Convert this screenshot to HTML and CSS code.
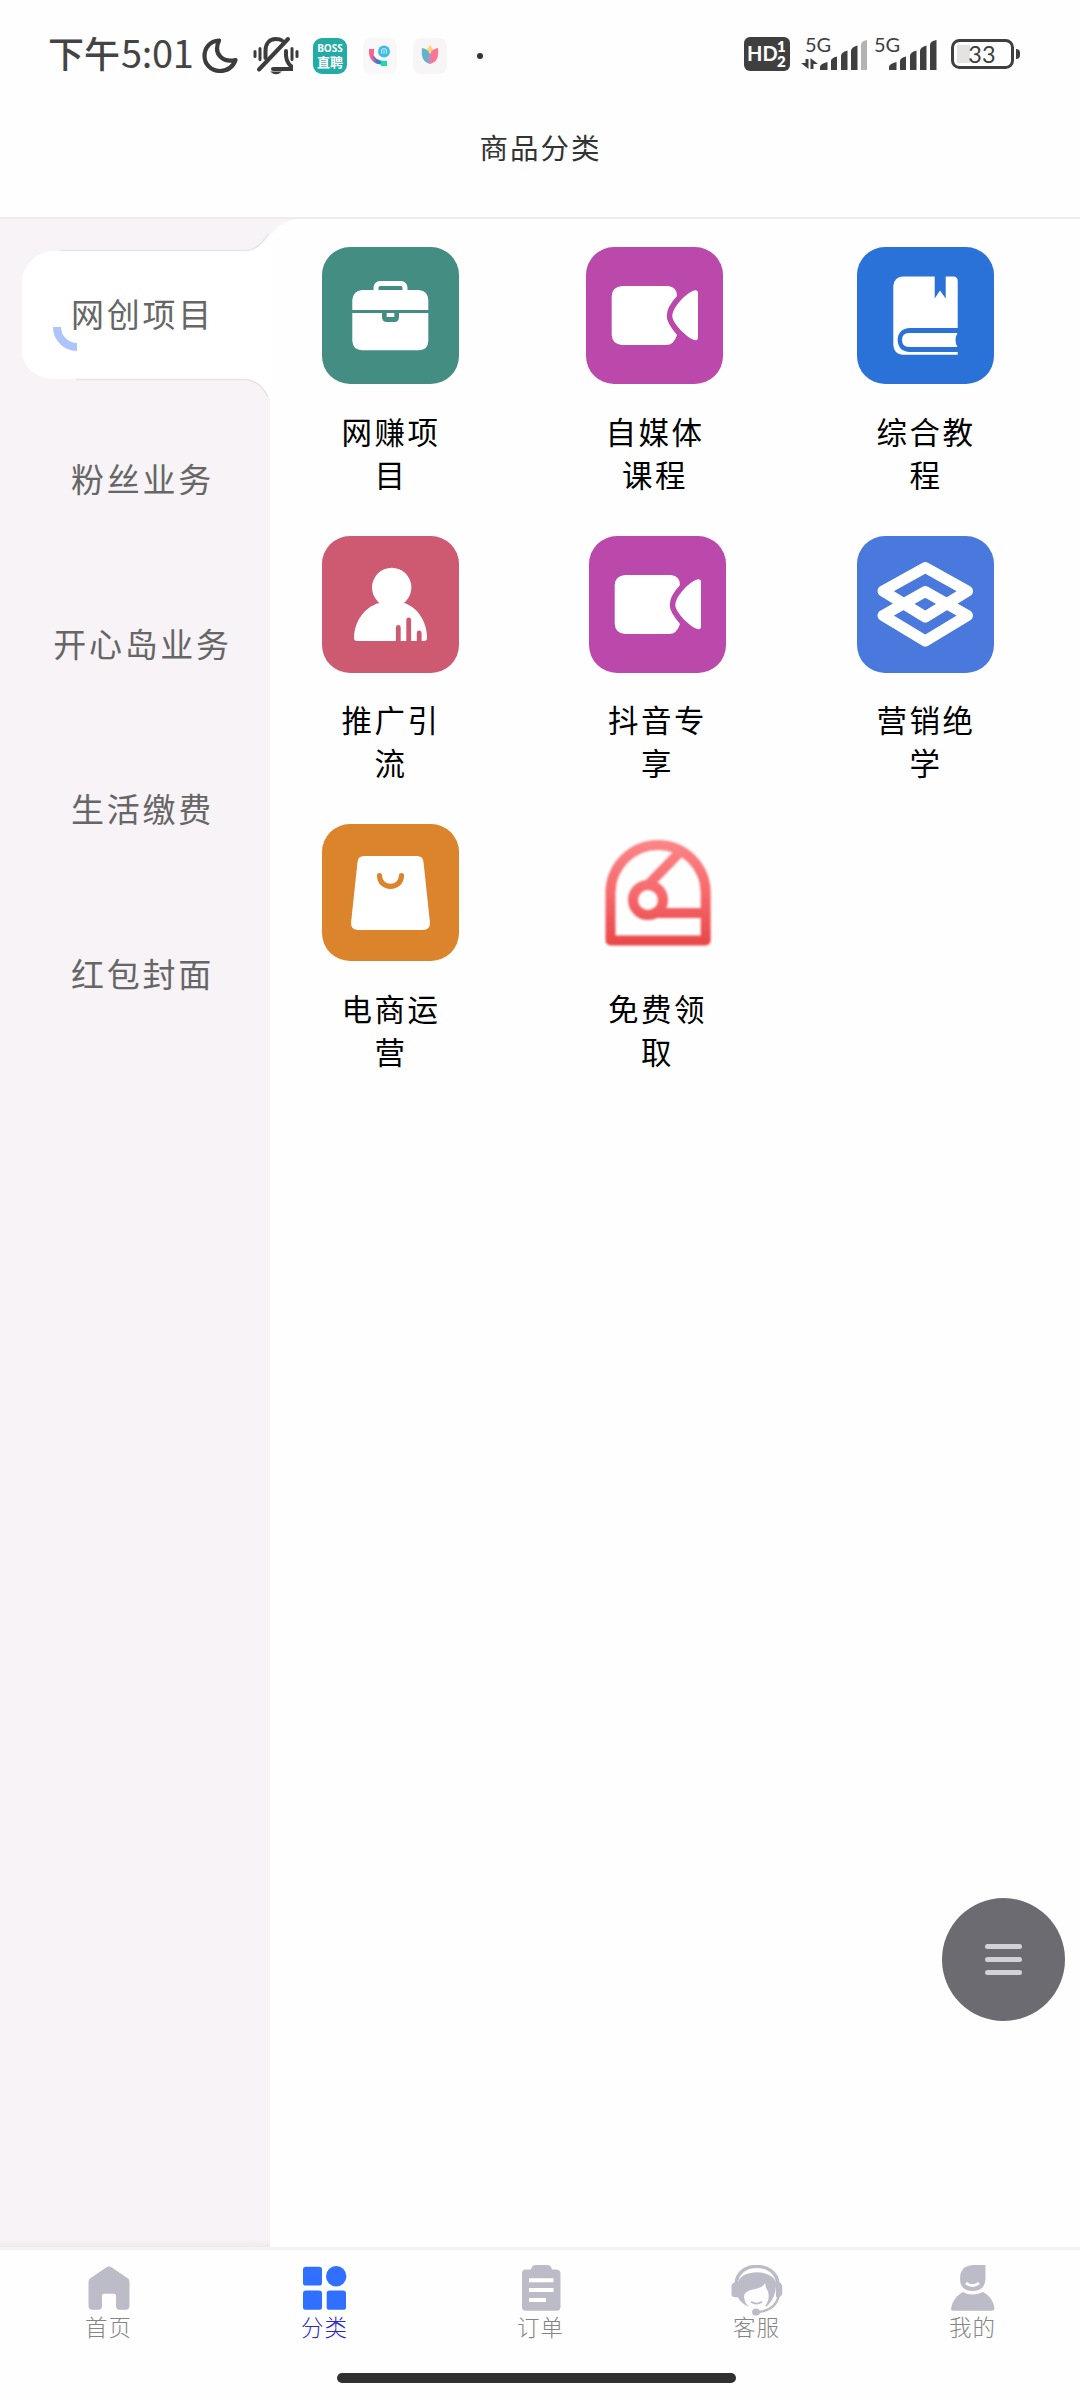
FILE: index.html
```html
<!DOCTYPE html>
<html lang="zh-CN">
<head>
<meta charset="utf-8">
<title>商品分类</title>
<link rel="stylesheet" href="styles.css">
</head>
<body>
<svg class="defs" width="0" height="0" aria-hidden="true">
  <symbol id="video" viewBox="0 0 137 137">
    <path fill="#fff" d="M36 39H82Q91 40 91 49Q80.700 60 80.700 69Q80.700 76 91 88Q88 98 80 98H36Q26 97 25.700 88V49Q26 40 36 39Z"/>
    <path fill="#fff" d="M86.300 69C86.300 60 101 45 109 43.200Q112 43 112 46V90Q112 94 108.500 93C101 91 86.300 76 86.300 69Z"/>
  </symbol>
</svg>
<div class="app">
  <header class="status">
    <div class="status-left">
      <span class="time">下午<b>5:01</b></span>
      <svg class="moon" width="36" height="36" viewBox="0 0 36 36"><path d="M17 2.500C8 3 2.500 10 2.500 18A15 15 0 0 0 17.500 33C25 33 31 29 33.500 22C22 25 10.500 17 17 2.500Z" fill="none" stroke="#3c3c3c" stroke-width="4.200" stroke-linejoin="round"/></svg>
      <svg class="bell" width="46" height="40" viewBox="0 0 46 40" fill="none" stroke="#3c3c3c" stroke-width="4" stroke-linecap="round"><path d="M2 15.500v5M7 12.500v11M39 12.500v11M44 15.500v5" stroke-width="3"/><path d="M12.500 22V15C12.500 7 17 3 22.500 3Q27 3 29 4.500M33 15V20Q34 27 38 30V33H20"/><path d="M6 33.500L35 3"/><path d="M17 35.500H29Q23 41 17 35.500Z" fill="#3c3c3c" stroke="none"/></svg>
      <svg class="boss" width="34" height="36" viewBox="0 0 34 36"><rect width="34" height="36" rx="9" fill="#23aba5"/><text x="17" y="14" class="boss-en">BOSS</text><text x="17" y="29" class="boss-cn">直聘</text></svg>
      <svg class="call" width="34" height="36" viewBox="0 0 34 36"><defs><linearGradient id="cg"><stop stop-color="#ff5f92"/><stop offset=".45" stop-color="#3d73c9"/><stop offset="1" stop-color="#18ddb0"/></linearGradient></defs><rect width="34" height="36" rx="8" fill="#f8f8f9"/><path d="M8 11V15Q9 25 23 25" stroke="url(#cg)" stroke-width="4" fill="none"/><path d="M6 11h5v5H6z" fill="#ff6096"/><path d="M18 23h6v5h-6z" fill="#18dcb0"/><circle cx="21" cy="13.500" r="6" fill="#41bce9"/><path d="M18.500 15.500V13a2.500 2.500 0 0 1 5 0v2.500M21 12v4" stroke="#c7f2ff" fill="none"/></svg>
      <svg class="tulip" width="34" height="36" viewBox="0 0 34 36"><rect width="34" height="36" rx="8" fill="#f7f5f6"/><path d="M17 7L22 14H12Z" fill="#ffd477"/><path d="M17 26C10 24 8 19 9 10Q15 11 17 16Z" fill="#62b3ca"/><path d="M17 26C24 24 26 19 25 10Q19 11 17 16Z" fill="#fb7597"/><path d="M17 16Q21 22 17 26Q13 22 17 16Z" fill="#d184b7"/></svg>
      <span class="dot"></span>
    </div>
    <svg class="status-right" width="284" height="64" viewBox="0 -12 284 64" fill="#3f3f3f">
      <rect x="4" y="2" width="46" height="34" rx="6"/>
      <text x="7" y="26" class="hd">HD</text><text x="37" y="17" class="sim">1</text><text x="37" y="32" class="sim">2</text>
      <text x="65" y="17" class="net">5G</text><text x="134" y="17" class="net">5G</text>
      <path d="M65.500 24H68.500V34L61 28H65.500ZM70.500 34V23L78 29H73.500V34Z"/>
      <path d="M80 35V32Q80 29 87.500 27V35ZM91 35V26Q91 23 97 21.500V35ZM101 35V21Q101 17 107.500 15.500V35ZM111 35V16Q111 12 117.500 10.500V35Z"/>
      <path d="M121 35V10Q121 6 127 5V35Z" fill="#b3b3b3"/>
      <path d="M149 35V32Q149 29 156.500 27V35ZM160 35V26Q160 23 166 21.500V35ZM170 35V21Q170 17 176.500 15.500V35ZM180 35V16Q180 12 186.500 10.500V35ZM190 35V10Q190 6 196.500 5V35Z"/>
      <path d="M218 10h12v18h-12q-1 0-1-1V11q0-1 1-1Z" fill="#e3e3e3"/>
      <rect x="212.500" y="5.500" width="60" height="27" rx="7" fill="none" stroke="#3f3f3f" stroke-width="3"/><path d="M276 14q4 0 4 4v2q0 4-4 4Z"/>
      <text x="242" y="27.500" class="pct">33</text>
    </svg>
  </header>
  <h1 class="title">商品分类</h1>
  <main class="main">
    <nav class="side">
      <svg class="active-bg" width="300" height="190" viewBox="0 0 300 190">
        <path d="M269 0H297C283 1 276 9 269 18Z" fill="#f8f3f7"/>
        <path d="M54 32H245C258 32 265 22 271 14V183C266 170 258 160 245 160H54C38 160 22 148 22 134V62C22 46 38 32 54 32Z" fill="#fff"/>
        <path d="M60 31.500H246Q260 30 268 15M76 160.500H246Q260 162 268 178" fill="none" stroke="#e7e4e9" stroke-width="1.500"/>
        <path d="M57 108A20 20 0 0 0 77 128" fill="none" stroke="#adc4ff" stroke-width="8"/>
      </svg>
      <a class="side-item on">网创项目</a>
      <a class="side-item">粉丝业务</a>
      <a class="side-item">开心岛业务</a>
      <a class="side-item">生活缴费</a>
      <a class="side-item">红包封面</a>
    </nav>
    <section class="goods">
      <div class="row row-first">
        <a class="item"><svg class="tile teal" viewBox="0 0 137 137"><rect x="54" y="36.500" width="29" height="13" rx="4" fill="none" stroke="#fff" stroke-width="5"/><path d="M40 43H97Q106 44 106.300 53V63H30.300V53Q31 44 40 43ZM30.300 66H106.300V94Q106 103 97 103.300H40Q31 103 30.300 94Z" fill="#fff"/><path d="M60 63H77V70Q77 75 72 75H65Q60 75 60 70Z" fill="#438d82"/><path d="M64.700 66H72.300V70H64.700Z" fill="#fff"/></svg><span>网赚项目</span></a>
        <a class="item"><svg class="tile purple" viewBox="0 0 137 137"><use href="#video"/></svg><span>自媒体课程</span></a>
        <a class="item"><svg class="tile blue" viewBox="0 0 137 137"><path d="M46 29.500H77.700V51.500L83 43.500L88.700 51.500V29.500H97Q100.700 30 100.700 34V81H53C45 81 40.700 86 40.700 93S45 105 53 105H100.700V107.700H45Q37 107 36.300 98V39Q37 30 46 29.500Z" fill="#fff"/><path d="M52 86H100.500Q96.500 93 100.500 100H52Q45 100 45 93T52 86Z" fill="#fff"/></svg><span>综合教程</span></a>
      </div>
      <div class="row">
        <a class="item"><svg class="tile rose" viewBox="0 0 137 137"><circle cx="69.700" cy="51.500" r="19.700" fill="#fff"/><path d="M57 67H82C95 71 105 85 105 102Q105 105 102 105H35Q32 105 32 102C32 85 43 71 57 67Z" fill="#fff"/><path d="M76.300 106V91.500M86.700 106V84M97.200 106V97" stroke="#cd5a70" stroke-width="4.800" stroke-linecap="round"/><path d="M72 105h30v5H72z" fill="#cd5a70"/></svg><span>推广引流</span></a>
        <a class="item"><svg class="tile purple" viewBox="0 0 137 137"><use href="#video"/></svg><span>抖音专享</span></a>
        <a class="item"><svg class="tile indigo" viewBox="0 0 137 137"><path d="M68.300 31.500L110.500 55L68.300 81L26 55ZM68.300 55.500L110.500 79.500L68.300 105L26 79.500Z" fill="none" stroke="#fff" stroke-width="11" stroke-linejoin="round"/></svg><span>营销绝学</span></a>
      </div>
      <div class="row">
        <a class="item"><svg class="tile orange" viewBox="0 0 137 137"><path d="M42 32H95Q101 32 101.500 38L108 99Q108 106 101 106H36Q29 106 29 99L35.500 38Q36 32 42 32Z" fill="#fff"/><path d="M57.500 51.500C57.500 66 79.500 66 79.500 51.500" fill="none" stroke="#db842b" stroke-width="5.200" stroke-linecap="round"/></svg><span>电商运营</span></a>
        <a class="item"><svg class="tile soft" viewBox="0 0 137 137"><defs><linearGradient id="rg" x1="0" y1="16" x2="0" y2="122" gradientUnits="userSpaceOnUse"><stop stop-color="#fb8688"/><stop offset=".5" stop-color="#f6696c"/><stop offset="1" stop-color="#e84648"/></linearGradient></defs><g fill="none" stroke="url(#rg)" stroke-width="10" stroke-linejoin="round"><path d="M21.500 116.500V69C21.500 43 42 21 69 21S116.700 43 116.700 69V116.500Z"/><circle cx="59" cy="76" r="15"/><path d="M93 26L57 63M66 89.100L117 89"/></g></svg><span>免费领取</span></a>
        <a class="item"></a>
      </div>
    </section>
  </main>
  <button class="fab" aria-label="菜单"><i></i><i></i><i></i></button>
  <footer class="tabs">
    <a class="tab"><svg width="52" height="52" viewBox="0 0 52 58" preserveAspectRatio="none"><path fill="#bcbcc8" d="M23.500 2.500Q26 1 28.500 2.500L45 15Q46.500 16 46.500 19V45Q46.500 50 43 50H36Q33 50 33 45V34Q33 32 31 32H21Q19 32 19 34V45Q19 50 16 50H9Q5.500 50 5.500 45V19Q5.500 16 7 15Z"/></svg><span>首页</span></a>
    <a class="tab on"><svg width="52" height="52" viewBox="0 0 52 58" preserveAspectRatio="none" fill="#306fff"><rect x="4" y="2" width="19" height="21" rx="3"/><ellipse cx="37.200" cy="12.500" rx="10.200" ry="11.500"/><rect x="4" y="28.500" width="19" height="21.500" rx="3"/><rect x="27.700" y="28.500" width="19.300" height="21.500" rx="3"/></svg><span>分类</span></a>
    <a class="tab"><svg width="52" height="52" viewBox="0 0 52 58" preserveAspectRatio="none"><path fill="#bcbcc8" d="M11 5H16Q17 0 21 0H32Q36 0 37 5H41Q45 5 45.500 9V47Q45 51 42 51H11Q7 51 7 47V9Q7 5 11 5Z"/><path d="M14 17H38.500M14 28H38.500M14 39H31" stroke="#fff" stroke-width="4.500"/></svg><span>订单</span></a>
    <a class="tab"><svg width="52" height="52" viewBox="0 0 52 58" preserveAspectRatio="none"><path d="M5 21C6 8 15 1.500 25.700 1.500S46 8 47 21" fill="none" stroke="#bcbcc8" stroke-width="3.500"/><path fill="#bcbcc8" d="M7 19C9 12 17 8 25.500 8S43 12 45 19Q46 35 36 46L34 46Q41 35 35 25L34 20Q31 26 23 27Q13 29 13 35Q13 41 18 47Q9 42 7 36Q0 36 .5 33V23Q1 19 7 19Z"/><path fill="#bcbcc8" d="M45 18Q51 19 51.200 24V32Q51 36 45 36Z"/><path d="M20 41Q25.500 45 31 41" fill="none" stroke="#bcbcc8" stroke-width="2"/><path d="M48 34Q44 52 25 52.500" fill="none" stroke="#bcbcc8" stroke-width="2.500"/><circle cx="25" cy="52.500" r="4" fill="#bcbcc8"/></svg><span>客服</span></a>
    <a class="tab"><svg width="52" height="52" viewBox="0 0 52 58" preserveAspectRatio="none" fill="#bcbcc8"><path d="M26 0H38.500V15Q38 29 25.500 29T13 15Q13 1 26 0Z"/><path d="M16 30Q25 36 36 30C43 34 47 41 47.500 49Q47 51 45 51H6Q4 51 4 49C5 41 9 34 16 30Z"/><path d="M19 20Q25.500 26 32 20" fill="none" stroke="#fff" stroke-width="3"/></svg><span>我的</span></a>
  </footer>
  <div class="home-bar"></div>
</div>
</body>
</html>
```
FILE: styles.css
```css
* { box-sizing: border-box; }
body { margin: 0; background: #fff; font-family: "Noto Sans CJK SC", sans-serif; }
.defs { position: absolute; }
.app { position: relative; width: 1080px; height: 2400px; display: flex; flex-direction: column; overflow: hidden; background: #fefefe; }

.status { height: 109px; padding: 0 58px 0 48px; display: flex; justify-content: space-between; align-items: flex-start; }
.status-left { display: flex; align-items: center; height: 36px; margin-top: 37.5px; }
.time { display: flex; width: 154px; margin-top: -7px; font-size: 36px; line-height: 36px; font-weight: 500; color: #444; white-space: nowrap; }
.time b { margin-left: 1px; font-size: 38px; font-weight: 400; letter-spacing: -.3px; }
.bell { margin-left: 15px; }
.boss { margin-left: 14px; }
.call { margin-left: 16px; }
.tulip { margin-left: 16px; }
.dot { width: 6px; height: 6px; margin-left: 30px; border-radius: 50%; background: #333; }
.boss-en { font: 700 10px "Open Sans", sans-serif; fill: #fff; text-anchor: middle; }
.boss-cn { font: 700 13px "Noto Sans CJK SC", sans-serif; fill: #fff; text-anchor: middle; }
.status-right { margin: 23px -2px 0 0; }
.hd { font: 700 20px Lato, sans-serif; fill: #fff; }
.sim { font: 800 15px Lato, sans-serif; fill: #fff; }
.net { font: 400 20px Lato, sans-serif; }
.pct { font: 400 23.5px Lato, sans-serif; text-anchor: middle; }

.title { margin: 0; height: 110px; padding: 18px 0 0 1px; border-bottom: 2px solid #ececec; text-align: center; font-size: 28.5px; font-weight: 400; line-height: 40px; letter-spacing: 2px; color: #333; }

.main { height: 2028px; display: flex; }
.side { position: relative; width: 270px; padding-top: 12px; background: linear-gradient(#f8f3f7 2020px, #eee9ec 2028px); }
.side-item { position: relative; display: flex; align-items: center; justify-content: center; height: 164.8px; padding-left: 15px; font-size: 33px; letter-spacing: 2.7px; color: #666; }
.active-bg { position: absolute; left: 0; top: 0; }
.goods { width: 810px; padding: 28px 86px 0 52px; }
.row { display: flex; justify-content: space-between; height: 288.5px; }
.row .item:nth-child(2) { margin-right: 2px; }
.row-first .item:nth-child(2) { margin-right: 7px; }
.item { width: 137px; display: flex; flex-direction: column; align-items: center; }
.item span { width: 110px; margin-top: 25.5px; padding-left: 1px; font-size: 30.5px; line-height: 43px; letter-spacing: 2.5px; color: #000; text-align: center; word-break: break-all; }
.tile { width: 137px; height: 137px; border-radius: 28px; }
.soft { filter: blur(.8px); }
.teal { background: #438d82; }
.purple { background: #bb49ab; }
.blue { background: #2a71d8; }
.rose { background: #cd5a70; }
.indigo { background: #4979dc; }
.orange { background: #db842b; }

.fab { position: absolute; left: 942px; top: 1898px; width: 123px; height: 123px; padding: 0; border: 0; border-radius: 50%; background: #6b6b71; display: flex; flex-direction: column; align-items: center; justify-content: center; gap: 8px; }
.fab i { width: 37px; height: 5px; border-radius: 3px; background: #d1d1d7; }

.tabs { height: 124px; display: flex; border-top: 3px solid #f3f3f4; }
.tab { flex: 1; display: flex; flex-direction: column; align-items: center; padding: 15px 0 0 1px; font-size: 22.5px; font-weight: 300; line-height: 30px; letter-spacing: 1px; color: #858585; }
.tab span { margin-top: -6px; }
.tab.on { color: #3029c8; }
.home-bar { width: 399px; height: 10px; margin: 2px 0 0 337px; border-radius: 5px; background: #303030; }
```
